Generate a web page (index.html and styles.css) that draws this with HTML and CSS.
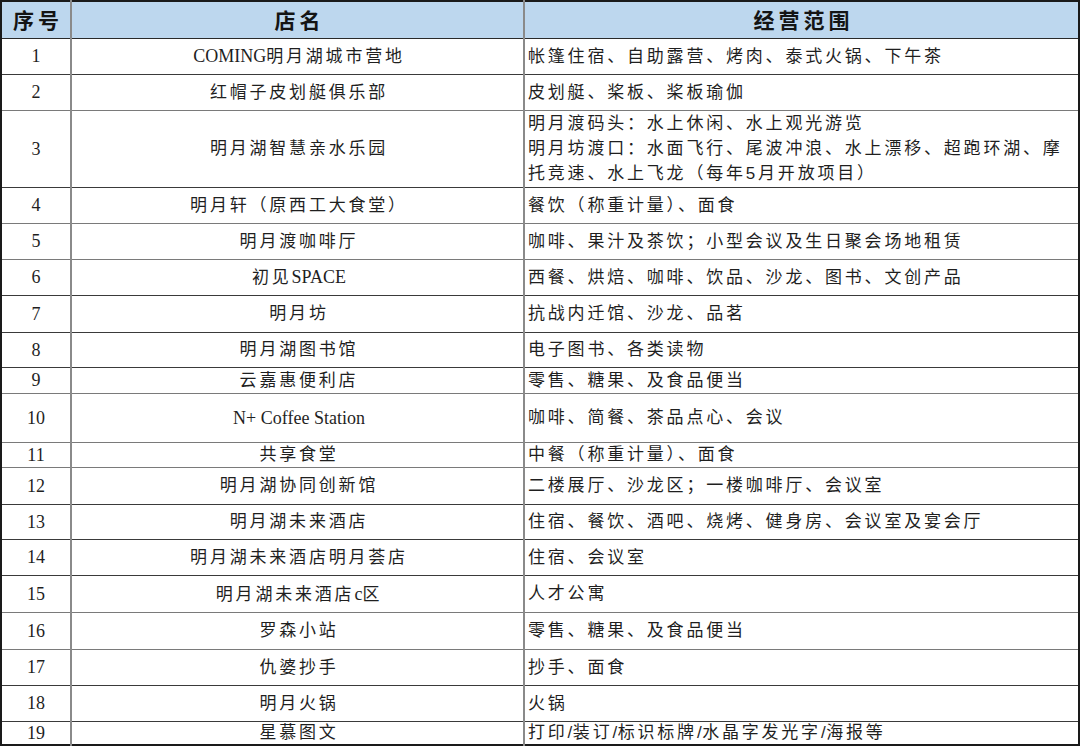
FILE: index.html
```html
<!DOCTYPE html>
<html lang="zh-CN">
<head>
<meta charset="utf-8">
<title>明月湖商户经营范围</title>
<link rel="stylesheet" href="styles.css">
</head>
<body>
<table class="shops">
  <colgroup>
    <col class="c-no">
    <col class="c-name">
    <col class="c-scope">
  </colgroup>
  <thead>
    <tr class="r37 head">
      <th class="no">序号</th>
      <th class="name">店名</th>
      <th class="name">经营范围</th>
    </tr>
  </thead>
  <tbody>
    <tr class="r36"><td class="no">1</td><td class="name"><span class="lat">COMING</span>明月湖城市营地</td><td class="scope">帐篷住宿、自助露营、烤肉、泰式火锅、下午茶</td></tr>
    <tr class="r36 g"><td class="no">2</td><td class="name">红帽子皮划艇俱乐部</td><td class="scope">皮划艇、桨板、桨板瑜伽</td></tr>
    <tr class="r77"><td class="no">3</td><td class="name">明月湖智慧亲水乐园</td><td class="scope multi">明月渡码头：水上休闲、水上观光游览<br>明月坊渡口：水面飞行、尾波冲浪、水上漂移、超跑环湖、摩托竞速、水上飞龙（每年5月开放项目）</td></tr>
    <tr class="r36 g"><td class="no">4</td><td class="name">明月轩（原西工大食堂）</td><td class="scope">餐饮（称重计量）、面食</td></tr>
    <tr class="r36 g"><td class="no">5</td><td class="name">明月渡咖啡厅</td><td class="scope">咖啡、果汁及茶饮；小型会议及生日聚会场地租赁</td></tr>
    <tr class="r36"><td class="no">6</td><td class="name">初见<span class="lat">SPACE</span></td><td class="scope">西餐、烘焙、咖啡、饮品、沙龙、图书、文创产品</td></tr>
    <tr class="r37"><td class="no">7</td><td class="name">明月坊</td><td class="scope">抗战内迁馆、沙龙、品茗</td></tr>
    <tr class="r35"><td class="no">8</td><td class="name">明月湖图书馆</td><td class="scope">电子图书、各类读物</td></tr>
    <tr class="r26 g"><td class="no">9</td><td class="name">云嘉惠便利店</td><td class="scope">零售、糖果、及食品便当</td></tr>
    <tr class="r49 g"><td class="no">10</td><td class="name"><span class="lat">N+ Coffee Station</span></td><td class="scope">咖啡、简餐、茶品点心、会议</td></tr>
    <tr class="r25 g"><td class="no">11</td><td class="name">共享食堂</td><td class="scope">中餐（称重计量）、面食</td></tr>
    <tr class="r37"><td class="no">12</td><td class="name">明月湖协同创新馆</td><td class="scope">二楼展厅、沙龙区；一楼咖啡厅、会议室</td></tr>
    <tr class="r35"><td class="no">13</td><td class="name">明月湖未来酒店</td><td class="scope">住宿、餐饮、酒吧、烧烤、健身房、会议室及宴会厅</td></tr>
    <tr class="r36"><td class="no">14</td><td class="name">明月湖未来酒店明月荟店</td><td class="scope">住宿、会议室</td></tr>
    <tr class="r37 g"><td class="no">15</td><td class="name">明月湖未来酒店<span class="lat">c</span>区</td><td class="scope">人才公寓</td></tr>
    <tr class="r37 g"><td class="no">16</td><td class="name">罗森小站</td><td class="scope">零售、糖果、及食品便当</td></tr>
    <tr class="r36"><td class="no">17</td><td class="name">仇婆抄手</td><td class="scope">抄手、面食</td></tr>
    <tr class="r36"><td class="no">18</td><td class="name">明月火锅</td><td class="scope">火锅</td></tr>
    <tr class="r24"><td class="no">19</td><td class="name">星慕图文</td><td class="scope">打印<span class="tight">/</span>装订<span class="tight">/</span>标识标牌<span class="tight">/</span>水晶字发光字<span class="tight">/</span>海报等</td></tr>
  </tbody>
</table>
</body>
</html>
```
FILE: styles.css
```css
html, body {
  margin: 0;
  padding: 0;
  background: #ffffff;
}

.shops {
  border-collapse: collapse;
  width: 1078px;
  table-layout: fixed;
  color: #1f1f1f;
  border: 2px solid #1a1a1a;
}

.c-no { width: 70px; }
.c-name { width: 453px; }
.c-scope { width: 555px; }

.shops th,
.shops td {
  padding: 0;
  border-left: 2px solid #8a8a8a;
  border-right: 2px solid #8a8a8a;
  border-bottom: 1px solid #3a3a3a;
  vertical-align: middle;
  overflow: hidden;
  white-space: nowrap;
}

.shops tr.g td {
  border-bottom-color: #7a7a7a;
}

.head th {
  background: #bdd7ee;
  border-bottom: 1px solid #2a2a2a;
  font-family: "Noto Sans CJK SC", "Noto Sans", sans-serif;
  font-weight: 700;
  font-size: 21px;
  letter-spacing: 4px;
  color: #141414;
  text-align: center;
  padding-left: 4px;
  line-height: 1;
}

.shops th:first-child,
.shops td:first-child {
  border-left: 2px solid #1a1a1a;
}

.shops th:last-child,
.shops td:last-child {
  border-right: 2px solid #1a1a1a;
}

.r24 { height: 24px; }
.r25 { height: 25px; }
.r26 { height: 26px; }
.r35 { height: 35px; }
.r36 { height: 36px; }
.r37 { height: 37px; }
.r49 { height: 49px; }
.r77 { height: 77px; }

td.no {
  text-align: center;
  font-family: "Liberation Serif", "Noto Sans CJK SC", serif;
  font-size: 18px;
  line-height: 1;
}

td.name {
  text-align: center;
  font-family: "Liberation Serif", "Noto Sans CJK SC", serif;
  font-size: 17px;
  letter-spacing: 2.8px;
  padding-left: 3px;
  line-height: 1;
}

td.scope {
  text-align: left;
  font-family: "Liberation Sans", "Noto Sans CJK SC", sans-serif;
  font-size: 17px;
  letter-spacing: 2.8px;
  padding-left: 3px;
  line-height: 1;
}

td.scope.multi {
  white-space: normal;
  line-height: 25px;
  padding-right: 4px;
}

.lat {
  font-size: 18px;
  letter-spacing: 0;
}

.tight {
  letter-spacing: 0.5px;
}
```
